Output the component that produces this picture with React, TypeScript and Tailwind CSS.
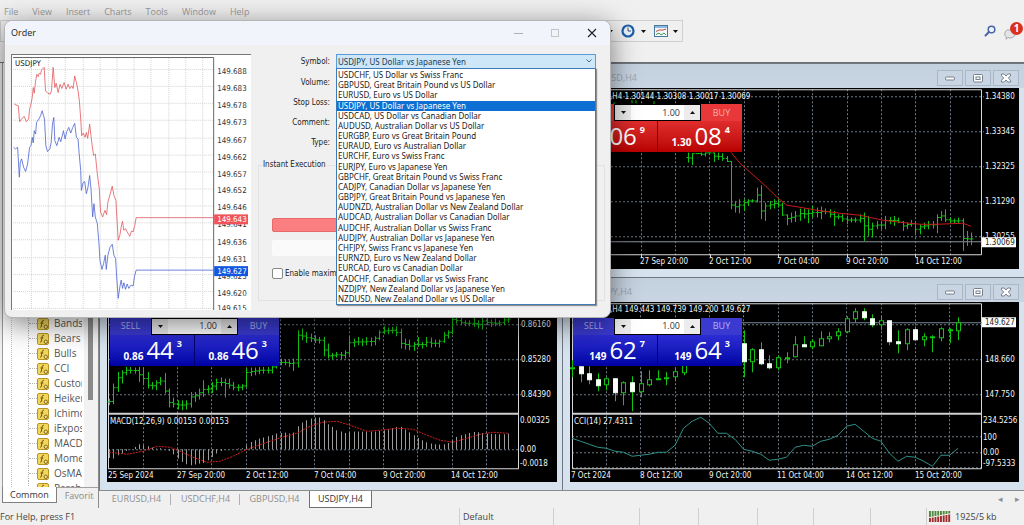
import { ReactNode } from 'react';

const MENU = ['File', 'View', 'Insert', 'Charts', 'Tools', 'Window', 'Help'];

const SYMBOLS = [
  'USDCHF, US Dollar vs Swiss Franc',
  'GBPUSD, Great Britain Pound vs US Dollar',
  'EURUSD, Euro vs US Dollar',
  'USDJPY, US Dollar vs Japanese Yen',
  'USDCAD, US Dollar vs Canadian Dollar',
  'AUDUSD, Australian Dollar vs US Dollar',
  'EURGBP, Euro vs Great Britain Pound',
  'EURAUD, Euro vs Australian Dollar',
  'EURCHF, Euro vs Swiss Franc',
  'EURJPY, Euro vs Japanese Yen',
  'GBPCHF, Great Britain Pound vs Swiss Franc',
  'CADJPY, Canadian Dollar vs Japanese Yen',
  'GBPJPY, Great Britain Pound vs Japanese Yen',
  'AUDNZD, Australian Dollar vs New Zealand Dollar',
  'AUDCAD, Australian Dollar vs Canadian Dollar',
  'AUDCHF, Australian Dollar vs Swiss Franc',
  'AUDJPY, Australian Dollar vs Japanese Yen',
  'CHFJPY, Swiss Franc vs Japanese Yen',
  'EURNZD, Euro vs New Zealand Dollar',
  'EURCAD, Euro vs Canadian Dollar',
  'CADCHF, Canadian Dollar vs Swiss Franc',
  'NZDJPY, New Zealand Dollar vs Japanese Yen',
  'NZDUSD, New Zealand Dollar vs US Dollar',
];
const SELECTED = 'USDJPY, US Dollar vs Japanese Yen';

const INDICATORS = ['Bands', 'Bears', 'Bulls', 'CCI', 'Custom', 'Heiken', 'Ichimoku', 'iExposure', 'MACD', 'Momentum', 'OsMA', 'Parabolic'];

type Bar = [number, number];

// high / low in thirds of a pixel below the chart's base line
const GBP_BARS: Bar[] = [
  [10, 40], [12, 47], [12, 14], [10, 20], [10, 22], [10, 12], [10, 38], [10, 32], [12, 35], [20, 38], [35, 180], [155, 190],
  [150, 192], [150, 185], [150, 170], [150, 160], [115, 160], [108, 210], [160, 215], [155, 180], [150, 178], [150, 175],
  [160, 200], [195, 228], [190, 220], [185, 218], [178, 215], [178, 208], [180, 222], [170, 205], [175, 205], [172, 210],
  [178, 195], [180, 205], [185, 230], [195, 210], [195, 218], [200, 225], [205, 220], [205, 220], [195, 220], [190, 275],
  [200, 260], [220, 265], [215, 240], [215, 240], [200, 240], [203, 225], [200, 230], [205, 222], [215, 245], [220, 240],
  [212, 232], [215, 258], [225, 255], [220, 240], [215, 240], [215, 238], [195, 252], [185, 215], [180, 218], [205, 222],
  [208, 222], [205, 222], [207, 305], [245, 290], [250, 288],
];

const EUR_BARS: Bar[] = [
  [265, 285], [220, 282], [185, 245], [180, 220], [170, 195], [170, 190], [172, 190], [170, 215], [172, 225], [185, 235],
  [215, 238], [210, 240], [200, 225], [188, 250], [235, 292], [262, 292], [270, 298], [270, 300], [270, 298], [245, 292],
  [245, 275], [235, 268], [210, 260], [225, 250], [215, 248], [205, 240], [202, 228], [205, 262], [205, 235], [215, 240],
  [222, 243], [222, 240], [175, 232], [172, 198], [172, 195], [170, 192], [170, 190], [170, 190], [165, 190], [148, 175],
  [145, 165], [148, 165], [150, 170], [145, 182], [60, 172], [55, 90], [65, 98], [70, 95], [75, 98], [80, 100], [80, 138],
  [100, 145], [128, 148], [125, 142], [125, 148], [120, 145], [80, 135], [85, 110], [80, 105], [85, 108], [80, 105],
  [82, 108], [78, 105], [60, 90], [48, 72], [52, 72], [50, 70], [48, 78], [55, 115], [85, 118], [88, 120], [95, 122],
  [80, 110], [95, 115], [80, 110], [82, 112], [88, 110], [88, 112], [65, 98], [60, 85], [15, 72], [10, 40], [22, 45],
  [30, 48], [30, 48], [22, 50], [30, 55], [15, 58], [20, 45], [28, 50], [25, 48], [30, 48], [20, 45], [15, 38],
];

const MACD = [
  443, 445, 435, 430, 422, 418, 410, 402, 405, 408, 412, 415, 414, 418, 422, 432, 445, 455, 462, 465, 463, 460, 458, 450,
  440, 430, 422, 418, 417, 417, 415, 414, 405, 395, 390, 385, 382, 378, 375, 370, 368, 367, 370, 367, 348, 337, 330, 325,
  322, 322, 330, 342, 350, 360, 364, 368, 366, 364, 364, 364, 364, 364, 364, 362, 360, 358, 354, 350, 350, 358, 366, 375,
  383, 390, 396, 400, 402, 403, 402, 398, 390, 380, 375, 372, 368, 365, 366, 368, 370, 371, 372, 372, 372, 370,
];

// [high, low, body top, body bottom, down]
type Candle = [number, number, number, number, number];
const JPY_CANDLES: (Candle | null)[] = [
  [360, 377, 367, 368, 0], [366, 382, 366, 373, 1], [366, 384, 373, 379, 1], [373, 391, 379, 385, 1], [377, 390, 378, 384, 0],
  [378, 401, 378, 392, 1], [381, 405, 382, 392, 0], [376, 411, 382, 391, 1], [371, 397, 383, 391, 0], [370, 386, 379, 384, 0],
  [370, 379, 378, 379, 0], [372, 385, 377, 378, 0], [367, 381, 371, 376, 0], [355, 375, 360, 372, 0],
  null, null, null, null, null, null,
  [330, 377, 343, 361, 1], [348, 372, 349, 361, 0], [342, 365, 349, 363, 1], [355, 369, 363, 367, 1], [355, 370, 357, 367, 0],
  [352, 363, 357, 358, 0], [336, 357, 344, 356, 0], [336, 347, 344, 346, 1], [339, 349, 341, 346, 0], [331, 346, 338, 345, 0],
  [332, 342, 336, 338, 0], [328, 340, 331, 335, 0], [316, 333, 318, 331, 0], [308, 322, 311, 318, 0], [308, 320, 311, 317, 1],
  [314, 327, 318, 324, 1], [316, 330, 320, 324, 0], [320, 345, 320, 341, 1], [330, 353, 341, 343, 1], [328, 350, 329, 343, 0],
  [326, 340, 329, 339, 1], [333, 346, 336, 339, 0], [335, 352, 336, 337, 0], [327, 341, 328, 337, 0], [328, 343, 329, 330, 0],
  [317, 340, 322, 330, 0],
];

const CCI = [
  438, 441, 444, 447, 448, 451, 452, 456, 455, 454, 452, 452, 445, 428, 421, 417, 423, 433, 433, 439, 449, 451, 454, 460,
  459, 457, 447, 445, 446, 441, 439, 435, 426, 424, 431, 438, 441, 453, 461, 456, 457, 461, 466, 455, 455, 448,
];

const ASK_TICKS =
  '40,145 52,150 56,198 63,188 70,182 76,198 83,190 86,160 90,145 94,125 97,95 100,112 104,75 108,55 112,62 115,52 119,55 122,42 130,34 134,105 141,112 148,115 152,105 157,34 162,95 166,82 172,110 178,85 183,98 190,80 196,100 202,85 207,98 213,90 217,98 222,60 227,80 232,105 236,135 240,190 243,240 248,232 253,245 257,230 261,248 267,205 271,240 274,265 279,300 284,295 290,355 296,400 300,470 306,485 313,465 318,478 322,440 329,415 335,392 340,420 346,435 350,505 353,555 358,540 362,515 366,498 370,525 375,520 380,530 388,543 393,527 398,530 403,510 407,487 640,487';
const BID_TICKS =
  '38,275 44,280 50,275 55,365 58,320 62,310 68,335 74,348 80,325 86,275 90,270 94,245 97,262 100,225 104,235 107,200 114,190 119,180 124,165 128,180 131,190 135,270 140,288 147,280 151,260 155,205 159,185 162,255 168,270 175,245 180,258 188,225 193,250 198,228 204,215 210,232 216,215 222,203 227,245 232,250 235,290 240,345 242,405 247,382 252,378 257,415 262,395 267,360 271,400 276,485 280,445 284,485 290,505 295,565 298,615 304,643 309,625 314,600 317,643 322,600 328,577 335,567 340,600 345,610 348,660 353,730 358,695 362,675 366,700 370,683 375,703 380,687 385,700 392,690 398,693 402,665 407,645 640,645';

const TICK_PRICES: [string, number][] = [
  ['149.688', 70], ['149.683', 87], ['149.678', 104], ['149.673', 121], ['149.667', 139], ['149.662', 156], ['149.657', 173],
  ['149.652', 190], ['149.646', 207], ['149.641', 224], ['149.636', 242], ['149.631', 259], ['149.625', 276], ['149.620', 293],
  ['149.615', 308],
];

function barPath(bars: Bar[], x0: number, base: number) {
  let prev = (bars[0][0] + bars[0][1]) / 2;
  return bars
    .map(([hi, lo], i) => {
      const x = Math.round(x0 + i * 4.29) + 0.5;
      const next = bars[i + 1] ?? bars[i];
      const mid = (Math.max(hi, next[0]) + Math.min(lo, next[1])) / 2;
      const close = Math.min(lo, Math.max(hi, mid));
      const open = prev;
      prev = close;
      const y = (v: number) => (base + v / 3).toFixed(1);
      return `M${x} ${y(hi)}V${y(lo)}M${x - 2} ${y(open)}H${x}M${x} ${y(close)}H${x + 2}`;
    })
    .join('');
}

function Grid({ xs, ys, x1, x2, y1, y2 }: { xs: number[]; ys: number[]; x1: number; x2: number; y1: number; y2: number }) {
  const d = xs.map((x) => `M${x} ${y1}V${y2}`).join('') + ys.map((y) => `M${x1} ${y}H${x2}`).join('');
  return <path d={d} fill="none" stroke="#6b7884" strokeWidth="1" strokeDasharray="2 2" />;
}

const gridXs = (start: number, n: number) => Array.from({ length: n }, (_, i) => Math.round(start + i * 34.33) + 0.5);

function Label({ x, y, children, fill = '#f4f4f4' }: { x: number; y: number; children: ReactNode; fill?: string }) {
  return (
    <text x={x} y={y + 3} fill={fill} className="font-['DejaVu_Sans_Condensed','Liberation_Sans',sans-serif] text-[8px]">
      {children}
    </text>
  );
}

function GbpChart() {
  return (
    <svg viewBox="570 89 449 180" className="block w-full h-full">
      <Grid xs={gridXs(572, 12)} ys={[97.5, 132.5, 167.5, 202.5, 237.5]} x1={571} x2={984} y1={90} y2={256} />
      <path d="M570 90.5H981.5V255.5H570" fill="none" stroke="#d8d8d8" />
      {[641, 710, 778, 847, 915].map((x) => (
        <path key={x} d={`M${x}.5 255V258`} stroke="#d8d8d8" />
      ))}
      <path d="M571 242.5H981" stroke="#8a949c" />
      <path d="M614 103v3M632 101v3M636 101v3M654 102v3" stroke="#00c800" />
      <path d={barPath(GBP_BARS, 688, 150)} fill="none" stroke="#12c312" />
      <polyline
        points="731,153 740,164 750,173 758,180 767,188 777,198 787,206 800,208 817,211 840,214 860,216 883,221 900,223 920,225 937,225 963,224 971,227"
        fill="none"
        stroke="#c9191c"
      />
      <Label x={610} y={97}>,H4 1.30144 1.30308 1.30017 1.30069</Label>
      {['1.34380', '1.33345', '1.32325', '1.31290', '1.30255'].map((t, i) => (
        <Label key={t} x={985} y={97 + i * 35}>{t}</Label>
      ))}
      <rect x="982" y="238" width="34" height="10" fill="#fff" />
      <Label x={985} y={243} fill="#222">1.30069</Label>
      <Label x={640} y={262}>27 Sep 20:00</Label>
      <Label x={709} y={262}>2 Oct 12:00</Label>
      <Label x={777} y={262}>7 Oct 04:00</Label>
      <Label x={846} y={262}>9 Oct 20:00</Label>
      <Label x={915} y={262}>14 Oct 12:00</Label>
    </svg>
  );
}

function EurChart() {
  return (
    <svg viewBox="107 302 450 180" className="block w-full h-full">
      <Grid xs={gridXs(142.7, 11)} ys={[324.5, 359.5, 394.5, 449.5]} x1={108} x2={521} y1={303} y2={468} />
      <path d="M108.5 303V468.5M518.5 303V468.5M108 468.5H519" fill="none" stroke="#d8d8d8" />
      <path d="M108 413.5H519" stroke="#d0d0d0" strokeWidth="2" />
      <path d={barPath(EUR_BARS, 109, 310)} fill="none" stroke="#12c312" />
      <path d={MACD.map((v, i) => `M${Math.round(109 + i * 4.29) + 0.5} 449V${(310 + v / 3).toFixed(1)}`).join('')} stroke="#9c9c9c" />
      <polyline
        points="109,452 127,454 143,451 157,446 170,447 180,451 193,457 207,462 220,461 233,456 247,449 267,442 282,437 297,433 310,426 323,422 337,421 350,425 367,431 380,430 397,428 413,429 427,435 440,440 453,442 467,438 480,434 493,432 508,433"
        fill="none"
        stroke="#d02020"
        strokeDasharray="2 1"
      />
      <Label x={521} y={324}>0.86160</Label>
      <Label x={521} y={359}>0.85280</Label>
      <Label x={521} y={394}>0.84390</Label>
      <Label x={520} y={420}>0.00325</Label>
      <Label x={520} y={449}>0.00</Label>
      <Label x={520} y={463}>-0.0018</Label>
      <Label x={110} y={421}>MACD(12,26,9) 0.00153 0.00153</Label>
      <Label x={108} y={475}>25 Sep 2024</Label>
      <Label x={177} y={475}>27 Sep 20:00</Label>
      <Label x={246} y={475}>2 Oct 12:00</Label>
      <Label x={314} y={475}>7 Oct 04:00</Label>
      <Label x={383} y={475}>9 Oct 20:00</Label>
      <Label x={451} y={475}>14 Oct 12:00</Label>
    </svg>
  );
}

function JpyChart() {
  return (
    <svg viewBox="570 302 449 180" className="block w-full h-full">
      <Grid xs={gridXs(606, 11)} ys={[324.5, 359.5, 394.5, 436.5, 452.5, 467.5]} x1={572} x2={984} y1={303} y2={468} />
      <path d="M572.5 303.5H981.5V468.5H572.5Z" fill="none" stroke="#d8d8d8" />
      <path d="M572 413.5H982" stroke="#d0d0d0" strokeWidth="2" />
      <path d="M572 322.5H982" stroke="#76879a" />
      {JPY_CANDLES.map((c, i) => {
        if (!c) return null;
        const x = Math.round(572 + i * 8.58);
        const [hi, lo, top, bottom, down] = c;
        return (
          <g key={i}>
            <path d={`M${x + 0.5} ${hi}V${lo}`} stroke="#12c312" />
            <rect
              x={x - 1.5}
              y={top + 0.5}
              width="4"
              height={bottom - top}
              fill={down ? '#fff' : '#000'}
              stroke={down ? '#e8ffe8' : '#12c312'}
            />
          </g>
        );
      })}
      <polyline points={CCI.map((y, i) => `${(572 + i * 8.58).toFixed(1)},${y}`).join(' ')} fill="none" stroke="#2f8f88" />
      <Label x={610} y={309}>,H4  149.443 149.739 149.200 149.627</Label>
      <Label x={574} y={421}>CCI(14) 27.4311</Label>
      <rect x="982" y="317" width="34" height="10" fill="#fff" />
      <Label x={985} y={322} fill="#222">149.627</Label>
      <Label x={985} y={359}>148.660</Label>
      <Label x={985} y={394}>147.750</Label>
      <Label x={983} y={420}>234.5256</Label>
      <Label x={983} y={437}>100</Label>
      <Label x={983} y={452}>0.00</Label>
      <Label x={983} y={463}>-97.5333</Label>
      <Label x={571} y={475}>7 Oct 2024</Label>
      <Label x={640} y={475}>8 Oct 12:00</Label>
      <Label x={709} y={475}>9 Oct 20:00</Label>
      <Label x={777} y={475}>11 Oct 04:00</Label>
      <Label x={846} y={475}>14 Oct 12:00</Label>
      <Label x={915} y={475}>15 Oct 20:00</Label>
    </svg>
  );
}

function Triangle({ up }: { up?: boolean }) {
  return (
    <svg viewBox="0 0 5 3" className="w-[5px] h-[3px]">
      <path d={up ? 'M0 3L2.5 0L5 3Z' : 'M0 0H5L2.5 3Z'} fill="#111" />
    </svg>
  );
}

function Quote({ lead, big, sup }: { lead: string; big: string; sup: string }) {
  return (
    <button type="button" className="flex flex-1 justify-end pr-3 text-white">
      <span className="pt-[15px] text-[10px] leading-3 font-bold">{lead}</span>
      <span className="pl-[3px] text-2xl leading-[30px]">{big}</span>
      <span className="pl-[3px] pt-1 text-[9px] leading-[10px] font-bold">{sup}</span>
    </button>
  );
}

function TradePanel({ red, lead, bid, ask, label }: { red?: boolean; lead: string; bid: [string, string]; ask: [string, string]; label: string }) {
  const head = red ? 'bg-[#e8383a] text-[#f5b0b0]' : 'bg-[#3a3ad0] text-[#b4b4f0]';
  const body = red
    ? 'bg-linear-to-b from-[#e02c2c] to-[#b80000] divide-[#7d0000]'
    : 'bg-linear-to-b from-[#2c2cd4] to-[#0000a4] divide-[#000070]';
  return (
    <div className="absolute left-[3px] top-4 w-[169px] font-['Open_Sans',sans-serif]">
      <div className="flex h-[17px]">
        <button type="button" className={`flex-1 text-[9px] leading-4 ${head}`}>SELL</button>
        <div className="flex w-[87px] items-center border border-black bg-white">
          <button type="button" aria-label="Less" className="flex h-full w-4 items-center justify-center bg-[#ececec]"><Triangle /></button>
          <input aria-label={label} defaultValue="1.00" className="w-0 flex-1 pr-1 text-right text-[9px] leading-3 text-[#333] outline-none" />
          <button type="button" aria-label="More" className="flex h-full w-4 items-center justify-center bg-[#ececec]"><Triangle up /></button>
        </div>
        <button type="button" className={`flex-1 text-[9px] leading-4 ${head}`}>BUY</button>
      </div>
      <div className={`flex h-[31px] divide-x ${body}`}>
        <Quote lead={lead} big={bid[0]} sup={bid[1]} />
        <Quote lead={lead} big={ask[0]} sup={ask[1]} />
      </div>
    </div>
  );
}

function FrameButton({ label, children }: { label: string; children: ReactNode }) {
  return (
    <button type="button" aria-label={label} className="flex h-4 w-[26px] items-center justify-center border border-[#a9b7c7] bg-[#c9d5e2]">
      <svg viewBox="0 0 12 10" className="w-3 h-[10px]" fill="#fff" stroke="#75808c">
        {children}
      </svg>
    </button>
  );
}

function ChartWindow({ title, children }: { title?: string; children?: ReactNode }) {
  return (
    <section className="flex flex-col overflow-hidden border-t border-l border-[#6e7681] bg-[#d6e2ee] pb-2 pl-[7px] pr-[5px]">
      <header className="-ml-[7px] -mr-[5px] flex h-6 shrink-0 items-end justify-between bg-linear-to-b from-[#c3d0de] to-[#c9d5e2] pb-[2px] pl-6 pr-[5px]">
        <span className="text-[9px] leading-4 text-[#9aa3ad]">{title}</span>
        <span className="flex gap-[2px]">
          <FrameButton label="Minimize"><rect x="1.5" y="4" width="9" height="3" rx="1" /></FrameButton>
          <FrameButton label="Maximize">
            <rect x="1.5" y="1.5" width="9" height="7.5" rx="1" />
            <rect x="4" y="4" width="4" height="2.5" />
          </FrameButton>
          <FrameButton label="Close">
            <path d="M1.5 1h2.7L6 3 7.800 1h2.700v1.800L8.300 5l2.200 2.200V9H7.800L6 7 4.200 9H1.500V7.200L3.700 5 1.500 2.800Z" />
          </FrameButton>
        </span>
      </header>
      <div className="relative min-h-0 flex-1 bg-black">{children}</div>
    </section>
  );
}

function FunctionIcon() {
  return (
    <svg viewBox="0 0 12 12" className="w-3 h-3 shrink-0">
      <rect x="0.5" y="0.5" width="11" height="11" rx="1.500" fill="#f3d75c" stroke="#b8952a" />
      <path d="M7 2.500C5.800 2 5.300 2.700 5.100 4L4.400 8C4.200 9 3.700 9.400 3 9M3.500 5H6.300" fill="none" stroke="#6b5310" />
      <circle cx="8.800" cy="8.800" r="1.700" fill="#f7e38a" stroke="#7d651a" />
    </svg>
  );
}

function Navigator() {
  return (
    <aside className="flex w-[99px] shrink-0 flex-col overflow-hidden border-r border-[#8b8b8b] bg-[#f0f0f0] pl-[2px]">
      <div className="flex min-h-0 flex-1 items-end border-l border-[#9a9a9a] bg-white">
        <ul className="flex-1 h-[171px] overflow-hidden border-l border-dotted border-[#c4c4c4] ml-2">
          {INDICATORS.map((name) => (
            <li key={name} className="ml-4 flex h-[15px] items-center overflow-hidden border-l border-dotted border-[#b5b5b5]">
              <span className="w-2 shrink-0 border-t border-dotted border-[#b5b5b5]" />
              <FunctionIcon />
              <span className="ml-[5px] w-7 overflow-hidden text-[10px] leading-[15px] text-[#555]">{name}</span>
            </li>
          ))}
        </ul>
        <div className="h-full w-[14px] bg-[#f2f2f2] pl-1">
          <div className="h-[337px] w-[5px] bg-[#8a8a8a]" />
        </div>
      </div>
      <div className="flex h-[21px] items-start border-t border-[#a0a0a0] text-[9px] leading-[15px]">
        <button type="button" className="-mt-px border border-t-0 border-[#808080] bg-white px-[7px] text-[#333]">Common</button>
        <button type="button" className="mr-1 overflow-hidden pl-2 text-[#8a8a8a]">Favorites</button>
      </div>
    </aside>
  );
}

function Toolbar() {
  return (
    <div className="flex h-[43px] shrink-0 items-start justify-between border-b border-[#707070] bg-[#f0f0f0]">
      <div className="flex h-[22px] w-[683px] items-center justify-end gap-2 border border-[#cfcfcf] pr-1">
        <Triangle />
        <button type="button" aria-label="Periods" className="flex items-center gap-[6px]">
          <svg viewBox="0 0 14 14" className="h-[14px] w-[14px]">
            <circle cx="7" cy="7" r="5.500" fill="#eaf4fc" stroke="#1d5ea8" strokeWidth="2.200" />
            <path d="M7 3.500V7H10" fill="none" stroke="#3c5068" />
          </svg>
          <Triangle />
        </button>
        <button type="button" aria-label="Templates" className="flex items-center gap-[5px]">
          <svg viewBox="0 0 14 12" className="h-3 w-[14px]">
            <rect x="0.5" y="0.5" width="13" height="11" fill="#f3f8fc" stroke="#47799f" />
            <path d="M1 2H13" stroke="#8db9dc" strokeWidth="2" />
            <path d="M2 6.500L5 5H9L12 4" fill="none" stroke="#c04a3a" />
            <path d="M2 9.500L5 8L7 10L10 8L12 10" fill="none" stroke="#3f9a4a" />
          </svg>
          <Triangle />
        </button>
      </div>
      <div className="flex items-center gap-2 pt-[2px]">
        <button type="button" aria-label="Search">
          <svg viewBox="0 0 12 12" className="h-3 w-3">
            <circle cx="7.500" cy="4.500" r="3.300" fill="#eef2fb" stroke="#4a62a8" strokeWidth="1.500" />
            <path d="M5 7L1.500 10.500" stroke="#4a62a8" strokeWidth="2" strokeLinecap="round" />
          </svg>
        </button>
        <button type="button" aria-label="Messages" className="relative h-[18px] w-5">
          <svg viewBox="0 0 12 11" className="mt-[6px] h-[11px] w-3">
            <path d="M6 1a5 4 0 1 1-2 7.600L2 10.200 2.300 8A4 4 0 0 1 6 1Z" fill="#e4e4e4" stroke="#a8a8a8" />
          </svg>
          <span className="absolute left-[6px] top-0 h-[13px] w-[13px] rounded-full bg-[#d9301f] text-center text-[10px] leading-[13px] font-bold text-white">1</span>
        </button>
      </div>
    </div>
  );
}

function TickChart() {
  const vertical = Array.from({ length: 11 }, (_, i) => `M${Math.round(30 + i * 17.2)}.5 57V309`).join('');
  const horizontal = Array.from({ length: 15 }, (_, i) => `M12 ${Math.round(68 + i * 17.14)}.5H213`).join('');
  return (
    <svg viewBox="11 54 240 256" className="w-60 h-64 border-t border-l border-[#777] bg-white">
      <path d={vertical + horizontal} stroke="#d3d3d3" strokeDasharray="1 1" />
      <path d="M12 56.500H213.500V310" fill="none" stroke="#666" />
      <g transform="translate(0 55) scale(0.3333)" fill="none" strokeWidth="2.400">
        <polyline points={ASK_TICKS} stroke="#e0585c" />
        <polyline points={BID_TICKS} stroke="#4a63cf" />
      </g>
      <Label x={14} y={62} fill="#222">USDJPY</Label>
      {TICK_PRICES.map(([t, y]) => (
        <Label key={t} x={217} y={y} fill="#333">{t}</Label>
      ))}
      <rect x="214" y="214" width="34" height="10" fill="#f0545a" />
      <Label x={217} y={219} fill="#fff">149.643</Label>
      <rect x="214" y="266" width="34" height="10" fill="#1157e0" />
      <Label x={217} y={271} fill="#fff">149.627</Label>
    </svg>
  );
}

function OrderDialog() {
  return (
    <div
      role="dialog"
      aria-label="Order"
      className="absolute left-1 top-5 h-[298px] w-[607px] overflow-hidden rounded-lg border border-[#b5b5b5] bg-[#f0f0f0] shadow-[0_6px_28px_rgba(0,0,0,0.5)]"
    >
      <div className="flex h-6 items-center justify-between bg-[#f1f4fa] pl-[6px] pr-[13px]">
        <h1 className="text-[9px] text-[#222]">Order</h1>
        <div className="flex items-center gap-7">
          <button type="button" aria-label="Minimize" className="w-[9px] border-t border-[#b0b0b0]" />
          <button type="button" aria-label="Maximize" className="h-2 w-2 border border-[#c4c4c4]" />
          <button type="button" aria-label="Close">
            <svg viewBox="0 0 10 10" className="w-[10px] h-[10px]">
              <path d="M1 1L9 9M9 1L1 9" stroke="#222" strokeWidth="1.100" />
            </svg>
          </button>
        </div>
      </div>
      <div className="flex pt-[9px] pl-[6px] font-['DejaVu_Sans_Condensed','Liberation_Sans',sans-serif] text-[8px] leading-[10px] text-[#222]">
        <TickChart />
        <form className="flex-1 pl-[7px] pr-[5px]">
          <div className="grid grid-cols-[72px_260px] gap-x-[6px]">
            <label htmlFor="symbol" className="h-[21px] pt-[3px] text-right">Symbol:</label>
            <div className="relative font-['Noto_Sans',sans-serif]">
              <select id="symbol" defaultValue={SELECTED} className="h-[15px] w-full appearance-none border border-[#5b9bd5] bg-[#cde6f8] pl-px text-[#1c3c54] outline-none">
                <option>{SELECTED}</option>
              </select>
              <svg viewBox="0 0 6 4" className="absolute right-1 top-[5px] h-1 w-[6px]">
                <path d="M0.500 0.500L3 3L5.500 0.500" fill="none" stroke="#4d6b80" />
              </svg>
              <ul
                role="listbox"
                aria-label="Symbols"
                className="absolute left-0 top-[14px] z-10 flex h-[237px] w-full flex-col border border-[#3d7ab8] bg-white pt-px shadow-[1px_1px_1px_rgba(0,0,0,0.4)]"
              >
                {SYMBOLS.map((s) => (
                  <li
                    key={s}
                    role="option"
                    aria-selected={s === SELECTED}
                    className={`flex flex-1 items-center whitespace-nowrap pl-px ${s === SELECTED ? 'bg-[#0c6fd1] text-white' : ''}`}
                  >
                    {s}
                  </li>
                ))}
              </ul>
            </div>
            {['Volume:', 'Stop Loss:', 'Comment:', 'Type:'].map((t) => (
              <span key={t} className="col-start-1 h-5 pt-[3px] text-right">{t}</span>
            ))}
          </div>
          <fieldset className="mt-[5px] h-[141px] border border-[#e2e2e2] pl-[13px]">
            <legend className="-ml-[10px] px-px">Instant Execution</legend>
            <button type="button" aria-label="Sell" className="mt-12 block h-[14px] w-[300px] rounded-xs border border-[#e86a6a] bg-[#fb7f80]" />
            <button type="button" aria-label="Buy" className="mt-2 block h-4 w-[300px] rounded-xs bg-[#fafafa]" />
            <label className="mt-3 flex items-center gap-[2px] whitespace-nowrap">
              <input type="checkbox" className="h-[11px] w-[11px] appearance-none rounded-xs border border-[#888] bg-white" />
              Enable maximum
            </label>
          </fieldset>
        </form>
      </div>
    </div>
  );
}

function StatusBar() {
  const cell = 'h-full border-l border-[#cfcfcf]';
  return (
    <footer className="flex h-[17px] shrink-0 items-center bg-[#f0f0f0] text-[9px] text-[#444]">
      <span className="w-[459px]">For Help, press F1</span>
      <span className={`w-[94px] pl-[3px] leading-[18px] ${cell}`}>Default</span>
      <span className={`w-[86px] ${cell}`} />
      <span className={`w-[59px] ${cell}`} />
      <span className={`w-[59px] ${cell}`} />
      <span className={`w-[56px] ${cell}`} />
      <span className={`w-[57px] ${cell}`} />
      <span className={`w-[56px] ${cell}`} />
      <span className={`flex flex-1 items-center gap-1 pl-[2px] ${cell}`}>
        <svg viewBox="0 0 22 11" className="h-[11px] w-[22px]">
          {[0, 1, 2, 3, 4, 5, 6, 7].map((i) => (
            <g key={i}>
              <rect x={i * 2.750} y="0" width="1.900" height={6 - i * 0.500} fill="#4e8a3c" />
              <rect x={i * 2.750} y={7 - i * 0.500} width="1.900" height={4 + i * 0.500} fill="#a02c2c" />
            </g>
          ))}
        </svg>
        1925/5 kb
      </span>
    </footer>
  );
}

export default function App() {
  return (
    <div className="relative flex h-screen flex-col overflow-hidden bg-[#f0f0f0] font-['Open_Sans',sans-serif]">
      <nav className="flex h-5 shrink-0 items-center gap-[14px] pl-1 pt-1 text-[9px] text-[#9a9a9a]">
        {MENU.map((m) => (
          <a key={m} href="#">{m}</a>
        ))}
      </nav>
      <Toolbar />
      <div className="flex min-h-0 flex-1">
        <Navigator />
        <div className="flex min-w-0 flex-1 flex-col">
          <main className="grid min-h-0 flex-1 grid-cols-[463fr_462fr] grid-rows-2">
            <ChartWindow />
            <ChartWindow title="GBPUSD,H4">
              <GbpChart />
              <TradePanel red label="GBPUSD volume" lead="1.30" bid={['06', '9']} ask={['08', '4']} />
            </ChartWindow>
            <ChartWindow>
              <EurChart />
              <TradePanel label="EURGBP volume" lead="0.86" bid={['44', '3']} ask={['46', '3']} />
            </ChartWindow>
            <ChartWindow title="USDJPY,H4">
              <JpyChart />
              <TradePanel label="USDJPY volume" lead="149" bid={['62', '7']} ask={['64', '3']} />
            </ChartWindow>
          </main>
          <div className="flex h-[18px] shrink-0 items-start border-t border-[#8b8b8b] pl-[3px] text-[9px] leading-4 text-[#8f8f8f]">
            {['EURUSD,H4', 'USDCHF,H4', 'GBPUSD,H4'].map((t) => (
              <button key={t} type="button" className="relative w-[69px] text-center">
                {t}
                {t !== 'GBPUSD,H4' && <span className="absolute right-0 top-[3px] h-[11px] border-r border-[#b0b0b0]" />}
              </button>
            ))}
            <button type="button" className="border border-t-0 border-[#707070] bg-white px-2 text-[#333]">USDJPY,H4</button>
            <span className="ml-auto flex gap-3 pr-1">
              <button type="button" aria-label="Previous tab">◂</button>
              <button type="button" aria-label="Next tab">▸</button>
            </span>
          </div>
        </div>
      </div>
      <StatusBar />
      <OrderDialog />
    </div>
  );
}
